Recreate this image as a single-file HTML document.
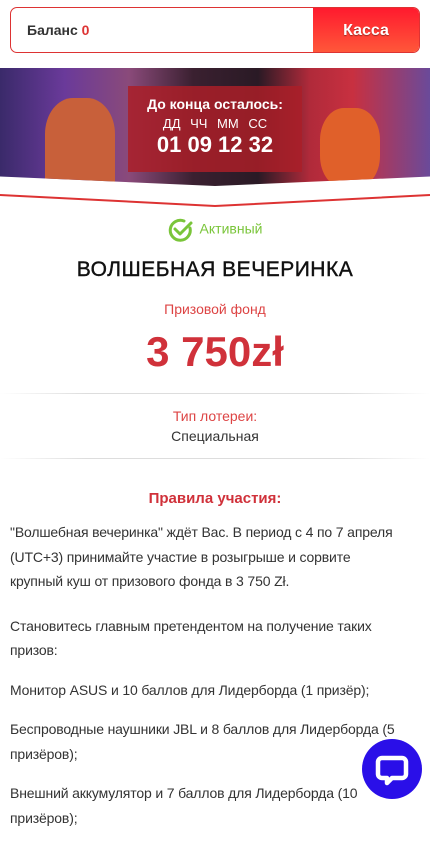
<!DOCTYPE html>
<html><head><meta charset="utf-8"><style>
*{margin:0;padding:0;box-sizing:border-box}
body{width:430px;height:814px;overflow:hidden;background:#fff;font-family:"Liberation Sans",sans-serif;color:#333;position:relative}
.top{position:absolute;left:10px;top:7px;width:410px;height:46px;border:1px solid #d33;border-radius:7px;overflow:hidden}
.bal{position:absolute;left:16px;top:14px;font-size:14px;font-weight:bold;color:#333}
.bal span{color:#d33}
.kassa{position:absolute;right:0;top:0;width:106px;height:46px;background:linear-gradient(#ff1a2e,#ff5a3a);color:#fff;font-weight:bold;font-size:16px;text-align:center;line-height:46px;text-shadow:0 1px 1px rgba(0,0,0,.4)}
.banner{position:absolute;left:0;top:68px;width:430px;height:118px;background:linear-gradient(90deg,#3a2a6a 0%,#6a3a9a 15%,#8a4a7a 30%,#3a2030 45%,#2a1a25 60%,#b02a3a 72%,#c83040 82%,#6a4a9a 100%);clip-path:polygon(0 0,100% 0,100% 92%,50% 100%,0 92%)}
.fig1{position:absolute;left:45px;top:30px;width:70px;height:90px;border-radius:40% 40% 0 0;background:#c8603a}
.fig2{position:absolute;left:320px;top:40px;width:60px;height:80px;border-radius:40%;background:#e0602a}
.box{position:absolute;left:128px;top:18px;width:174px;height:86px;background:rgba(170,30,40,.85);color:#fff;text-align:center}
.box .a{font-weight:bold;font-size:14px;margin-top:10px}
.box .b{font-size:13px;margin-top:4px;word-spacing:6px}
.box .c{font-weight:bold;font-size:22px;margin-top:1px}
.status{position:absolute;left:0;width:430px;top:217px;text-align:center;color:#7ac53a;font-size:14px}
h1{position:absolute;top:258px;width:430px;text-align:center;font-size:21px;font-weight:normal;color:#111;letter-spacing:.5px;-webkit-text-stroke:.4px #111}
.pf{position:absolute;top:301px;width:430px;text-align:center;color:#d44;font-size:14px}
.amt{position:absolute;top:328px;width:430px;text-align:center;color:#d0313a;font-size:42px;font-weight:bold}
.hr{position:absolute;left:0;width:430px;height:1px;background:linear-gradient(90deg,#fff,#ddd 20%,#ddd 80%,#fff)}
.tl{position:absolute;top:408px;width:430px;text-align:center;color:#d44;font-size:14px}
.sp{position:absolute;top:428px;width:430px;text-align:center;color:#333;font-size:14px}
.rules{position:absolute;top:490px;width:430px;text-align:center;color:#d0313a;font-size:15px;font-weight:bold}
.txt{position:absolute;left:10px;top:520px;width:420px;font-size:14px;letter-spacing:-.15px;line-height:24.5px;color:#333;white-space:nowrap}
.txt p{margin-bottom:15px}
.txt p.f{margin-bottom:20px}
.chat{position:absolute;left:362px;top:739px;width:60px;height:60px;border-radius:50%;background:#2a0fe8}
</style></head><body>
<div class="top"><div class="bal">Баланс <span>0</span></div><div class="kassa">Касса</div></div>
<div class="banner"><div class="fig1"></div><div class="fig2"></div>
<div class="box"><div class="a">До конца осталось:</div><div class="b">ДД ЧЧ ММ СС</div><div class="c">01 09 12 32</div></div></div>
<svg style="position:absolute;left:0;top:192px" width="430" height="18"><polyline points="0,3 215,14 430,3" fill="none" stroke="#d33" stroke-width="2"/></svg>
<div class="status"><svg width="26" height="26" viewBox="0 0 26 26" style="vertical-align:middle;margin-right:6px"><path d="M22 11A10 10 0 1 1 16 4" fill="none" stroke="#7ac53a" stroke-width="3" stroke-linecap="round"/><path d="M7 12l5 5 11-11" fill="none" stroke="#7ac53a" stroke-width="3" stroke-linecap="round" stroke-linejoin="round"/></svg>Активный</div>
<h1>ВОЛШЕБНАЯ ВЕЧЕРИНКА</h1>
<div class="pf">Призовой фонд</div>
<div class="amt">3 750zł</div>
<div class="hr" style="top:393px"></div>
<div class="tl">Тип лотереи:</div>
<div class="sp">Специальная</div>
<div class="hr" style="top:458px"></div>
<div class="rules">Правила участия:</div>
<div class="txt">
<p class="f">"Волшебная вечеринка" ждёт Вас. В период с 4 по 7 апреля<br>(UTC+3) принимайте участие в розыгрыше и сорвите<br>крупный куш от призового фонда в 3 750 Zł.</p>
<p>Становитесь главным претендентом на получение таких<br>призов:</p>
<p>Монитор ASUS и 10 баллов для Лидерборда (1 призёр);</p>
<p>Беспроводные наушники JBL и 8 баллов для Лидерборда (5<br>призёров);</p>
<p>Внешний аккумулятор и 7 баллов для Лидерборда (10<br>призёров);</p>
</div>
<div class="chat"><svg width="60" height="60" viewBox="0 0 60 60"><path d="M20 19h20a4 4 0 0 1 4 4v12a4 4 0 0 1-4 4H30l-5 5v-5h-5a4 4 0 0 1-4-4V23a4 4 0 0 1 4-4z" fill="none" stroke="#fff" stroke-width="4.5" stroke-linejoin="round"/></svg></div>
</body></html>
